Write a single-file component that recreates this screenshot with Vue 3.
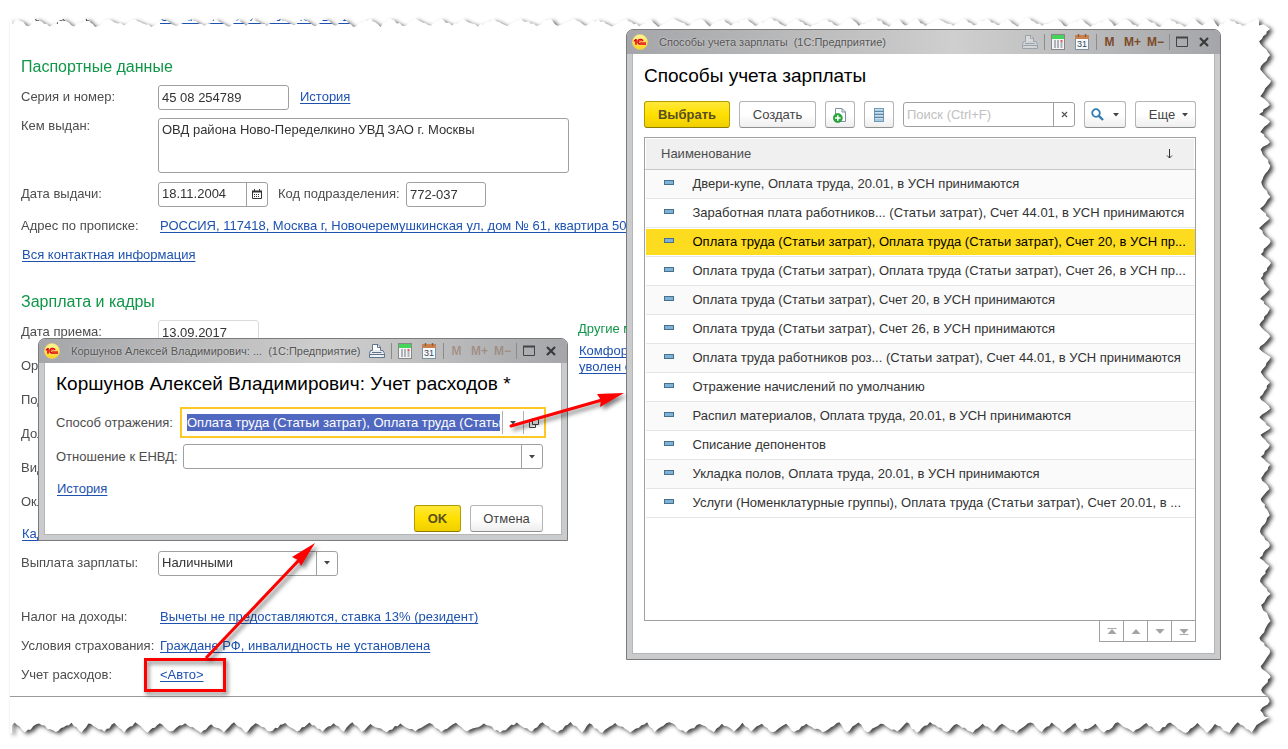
<script setup>
import { ref, onMounted } from 'vue'

const PAPER_W = 1261
const PAPER_H = 715

function random(seed) {
  let s = seed
  return () => {
    s = (s * 16807) % 2147483647
    return s / 2147483647
  }
}

// Walks along one side and returns [position, depth] pairs of a torn edge.
function tear(length, depth, seed) {
  const rnd = random(seed)
  const out = []
  let pos = 0
  let high = false
  let level = depth
  while (pos < length) {
    const step = 7 + rnd() * 10
    const target = high ? depth * (0.8 + rnd() * 0.2) : rnd() * depth * 0.15
    const parts = Math.ceil(step / 3)
    for (let i = 1; i <= parts; i++) {
      const jitter = i < parts ? (rnd() - 0.5) * 2.4 : 0
      const d = level + ((target - level) * i) / parts + jitter
      out.push([Math.min(length, pos + (step * i) / parts), Math.max(0, Math.min(depth, d))])
    }
    pos += step
    level = target
    high = !high
  }
  return out
}

function outline() {
  const top = tear(PAPER_W - 12, 9, 4241)
  const right = tear(PAPER_H - 20, 12, 977).map(([p, d]) => [PAPER_W - d, p + 4])
  const bottom = tear(PAPER_W - 14, 11, 3119).map(([p, d]) => [PAPER_W - 12 - p, PAPER_H - d])
  const pts = [[0, 0], ...top, ...right, ...bottom, [0, PAPER_H]]
  return pts
    .map(([x, y]) => `${((x / PAPER_W) * 100).toFixed(3)}% ${((y / PAPER_H) * 100).toFixed(3)}%`)
    .join(', ')
}
const paperClip = `polygon(${outline()})`

const series = ref('45 08 254789')
const issuer = ref('ОВД района Ново-Переделкино УВД ЗАО г. Москвы')
const issued = ref('18.11.2004')
const unit = ref('772-037')
const hired = ref('13.09.2017')
const method = ref('Оплата труда (Статьи затрат), Оплата труда (Статьи затрат), Счет 20, в УСН принимаются')
const envd = ref('')
const search = ref('')
const selected = ref(2)

const hidden = ['Организация:', 'Подразделение:', 'Должность:', 'Вид занятости:', 'Оклад:']

const rows = [
  'Двери-купе, Оплата труда, 20.01, в УСН принимаются',
  'Заработная плата работников... (Статьи затрат), Счет 44.01, в УСН принимаются',
  'Оплата труда (Статьи затрат), Оплата труда (Статьи затрат), Счет 20, в УСН пр...',
  'Оплата труда (Статьи затрат), Оплата труда (Статьи затрат), Счет 26, в УСН пр...',
  'Оплата труда (Статьи затрат), Счет 20, в УСН принимаются',
  'Оплата труда (Статьи затрат), Счет 26, в УСН принимаются',
  'Оплата труда работников роз... (Статьи затрат), Счет 44.01, в УСН принимаются',
  'Отражение начислений по умолчанию',
  'Распил материалов, Оплата труда, 20.01, в УСН принимаются',
  'Списание депонентов',
  'Укладка полов, Оплата труда, 20.01, в УСН принимаются',
  'Услуги (Номенклатурные группы), Оплата труда (Статьи затрат), Счет 20.01, в ...',
]

const methodInput = ref(null)
onMounted(() => {
  methodInput.value.focus({ preventScroll: true })
  methodInput.value.select()
})
</script>

<template>
  <div class="desk">
    <svg class="defs" width="0" height="0" aria-hidden="true">
      <defs>
        <linearGradient id="sun" x1="0" y1="0" x2="0" y2="1">
          <stop offset="0" stop-color="#fff8a0" />
          <stop offset="1" stop-color="#fcd21c" />
        </linearGradient>
        <symbol id="logo" viewBox="0 0 16 16">
          <circle cx="8" cy="8" r="7.6" fill="url(#sun)" stroke="#f0d060" stroke-width=".6" />
          <path d="M1.8 6.4 3.4 5H4.8V10.8H3.2V7.2L1.8 7.8Z" fill="#e2001a" />
          <path d="M11 7A2.6 2.3 0 1 0 8.6 10.1H14" fill="none" stroke="#e2001a" stroke-width="1.5" />
          <path d="M9.4 7.4A.9 .9 0 1 0 8.7 8.4H14" fill="none" stroke="#e2001a" stroke-width=".7" />
        </symbol>
        <symbol id="printer" viewBox="0 0 16 16">
          <path d="M3.5 7.5V1.5H9L11.5 4V7.5" fill="#fff" stroke="#5f7488" />
          <path d="M8.5 1.5V4.5H11.5" fill="none" stroke="#5f7488" />
          <path d="M3.5 7.5H1.5L.5 10.5V14.5H15.5V10.5L14 7.5H11.5" fill="#e6ecf0" stroke="#5f7488" />
          <path d="M3 9.5H12.5M.5 11.5H15.5" stroke="#5f7488" />
          <path d="M4 13H12" stroke="#fff" />
        </symbol>
        <symbol id="calc" viewBox="0 0 14 16">
          <rect x=".5" y=".5" width="13" height="15" fill="#f4f4f4" stroke="#878787" />
          <rect x="1" y="1" width="12" height="4" fill="#45d45a" />
          <path d="M3 7h2M6 7h2M3 9h2M6 9h2M3 11h2M6 11h2M3 13h2M6 13h2M9.5 9h2M9.5 11h2M9.5 13h2" stroke="#66727c" stroke-width="1.2" />
          <path d="M9.5 7h2" stroke="#e03030" stroke-width="1.6" />
        </symbol>
        <symbol id="cal" viewBox="0 0 14 16">
          <rect x=".5" y="2.5" width="13" height="13" fill="#f6f9fb" stroke="#8092a0" />
          <rect x="0" y="1" width="14" height="4" fill="#c9824f" />
          <path d="M3.5 0V3M10.5 0V3" stroke="#8a5a3a" stroke-width="1.4" />
          <text x="7" y="13" text-anchor="middle" font-size="9" fill="#34485c" font-family="Liberation Sans, Arial, sans-serif">31</text>
        </symbol>
        <symbol id="max" viewBox="0 0 12 12">
          <path d="M.5 2V10.5H11.5V2" fill="none" stroke="#444" />
          <path d="M0 1.5H12" stroke="#444" stroke-width="2" />
        </symbol>
        <symbol id="close" viewBox="0 0 10 10">
          <path d="M1 1 9 9M9 1 1 9" stroke="#3a3a3a" stroke-width="2.2" />
        </symbol>
        <symbol id="down" viewBox="0 0 6 4">
          <path d="M0 0H6L3 3.5Z" fill="#444" />
        </symbol>
      </defs>
    </svg>

    <div class="paper-shadow">
      <main class="paper" :style="{ clipPath: paperClip }">
        <div class="row cut">
          <span class="label">Гражданство:</span>
          <a class="ind" href="#">Страна: РОССИЯ, с 23.05.2012</a>
        </div>
        <h2 class="first">Паспортные данные</h2>
        <div class="row g5">
          <label class="label" for="series">Серия и номер:</label>
          <input id="series" v-model="series" class="field w131" />
          <a class="hist" href="#">История</a>
        </div>
        <div class="row area-row">
          <label class="label area-label" for="issuer">Кем выдан:</label>
          <textarea id="issuer" v-model="issuer" class="field area"></textarea>
        </div>
        <div class="row g8">
          <label class="label" for="issued">Дата выдачи:</label>
          <div class="combo w110">
            <input id="issued" v-model="issued" />
            <button type="button" aria-label="Календарь">
              <svg width="10" height="10" viewBox="0 0 10 10">
                <path d="M.5 2V9.5H9.5V2" fill="none" stroke="#333" />
                <path d="M0 2.5H10" stroke="#333" stroke-width="2" />
                <path d="M2.5 0V2M7.5 0V2" stroke="#333" />
                <path d="M2 5.5H8M2 7.5H8" stroke="#333" stroke-dasharray="1 1" />
              </svg>
            </button>
          </div>
          <label class="label unit-label" for="unit">Код подразделения:</label>
          <input id="unit" v-model="unit" class="field w80" />
        </div>
        <div class="row g6">
          <span class="label">Адрес по прописке:</span>
          <a class="ind" href="#">РОССИЯ, 117418, Москва г, Новочеремушкинская ул, дом № 61, квартира 50</a>
        </div>
        <div class="row g3"><a class="edge" href="#">Вся контактная информация</a></div>

        <div class="staff">
          <div>
            <h2>Зарплата и кадры</h2>
            <div class="row g5">
              <label class="label" for="hired">Дата приема:</label>
              <input id="hired" v-model="hired" class="field faint w101" readonly />
            </div>
            <div v-for="h in hidden" :key="h" class="row g8"><span class="label">{{ h }}</span></div>
            <div class="row g6"><a class="edge" href="#">Кадры</a></div>
          </div>
          <div class="other">
            <h3>Другие места</h3>
            <a href="#">Комфорт</a><br />
            <a href="#">уволен с</a>
          </div>
        </div>

        <div class="row g3">
          <label class="label" for="pay">Выплата зарплаты:</label>
          <div class="combo w180">
            <select id="pay"><option>Наличными</option></select>
            <span class="drop"><svg width="6" height="4"><use href="#down" /></svg></span>
          </div>
        </div>
        <div class="row tax">
          <span class="label">Налог на доходы:</span>
          <a class="ind" href="#">Вычеты не предоставляются, ставка 13% (резидент)</a>
        </div>
        <div class="row g3">
          <span class="label">Условия страхования:</span>
          <a class="ind" href="#">Граждане РФ, инвалидность не установлена</a>
        </div>
        <div class="row g3">
          <span class="label">Учет расходов:</span>
          <a class="ind" href="#">&lt;Авто&gt;</a>
        </div>
        <hr />
      </main>
    </div>

    <section class="window list-window">
      <header>
        <svg class="logo" width="16" height="16"><use href="#logo" /></svg>
        <span class="caption">Способы учета зарплаты &nbsp;(1С:Предприятие)</span>
        <button class="tool off" type="button" aria-label="Печать"><svg width="16" height="16"><use href="#printer" /></svg></button>
        <i></i>
        <button class="tool" type="button" aria-label="Калькулятор"><svg width="14" height="16"><use href="#calc" /></svg></button>
        <button class="tool" type="button" aria-label="Календарь"><svg width="14" height="16"><use href="#cal" /></svg></button>
        <i></i>
        <button class="mem" type="button">M</button>
        <button class="mem" type="button">M+</button>
        <button class="mem" type="button">M−</button>
        <i></i>
        <button class="sys" type="button" aria-label="Развернуть"><svg width="12" height="12"><use href="#max" /></svg></button>
        <button class="sys" type="button" aria-label="Закрыть"><svg width="10" height="10"><use href="#close" /></svg></button>
      </header>
      <div class="client list-client">
        <h1>Способы учета зарплаты</h1>
        <div class="toolbar">
          <button class="btn primary w86" type="button">Выбрать</button>
          <button class="btn w77" type="button">Создать</button>
          <button class="btn w30" type="button" aria-label="Создать группу">
            <svg width="14" height="16" viewBox="0 0 14 16">
              <path d="M2.5 7V1.5H9L12.5 5V14.5H8" fill="#fff" stroke="#7c93a6" />
              <path d="M9 1.5V5H12.5" fill="none" stroke="#7c93a6" />
              <circle cx="4.8" cy="11" r="4.5" fill="#27a83b" stroke="#178a2c" stroke-width=".6" />
              <path d="M2 11H7.6M4.8 8.2V13.8" stroke="#fff" stroke-width="1.6" />
            </svg>
          </button>
          <button class="btn w30" type="button" aria-label="Вид списка">
            <svg width="10" height="14" viewBox="0 0 10 14">
              <rect x=".5" y=".5" width="9" height="13" fill="#a9c8dc" stroke="#6f9ab8" />
              <path d="M0 3.5H10M0 6.5H10M0 9.5H10" stroke="#5c89aa" />
              <path d="M1 1.5H9M1 4.5H9M1 7.5H9M1 10.5H9" stroke="#cfe0ec" />
            </svg>
          </button>
          <div class="combo search">
            <input v-model="search" aria-label="Поиск" placeholder="Поиск (Ctrl+F)" />
            <button type="button" aria-label="Очистить"><svg width="7" height="7" viewBox="0 0 7 7"><path d="M1 1 6 6M6 1 1 6" stroke="#555" stroke-width="1.2" /></svg></button>
          </div>
          <button class="btn w42 find" type="button" aria-label="Найти">
            <svg width="13" height="13" viewBox="0 0 13 13">
              <circle cx="5" cy="5" r="3.8" fill="none" stroke="#2f7db3" stroke-width="1.8" />
              <path d="M7.8 7.8 12 12" stroke="#2f7db3" stroke-width="2.4" />
            </svg>
            <svg width="6" height="4"><use href="#down" /></svg>
          </button>
          <button class="btn w61 more" type="button">Еще <svg width="6" height="4"><use href="#down" /></svg></button>
        </div>
        <div class="grid">
          <table>
            <colgroup><col class="mark-col" /><col /></colgroup>
            <thead>
              <tr>
                <th colspan="2">
                  <div class="head">Наименование
                    <svg width="7" height="10" viewBox="0 0 7 10"><path d="M3.5 0V9M1 6.5 3.5 9 6 6.5" fill="none" stroke="#333" /></svg>
                  </div>
                </th>
              </tr>
            </thead>
            <tbody>
              <tr v-for="(r, i) in rows" :key="r" :class="{ picked: i === selected }" @click="selected = i">
                <td class="mark"><b></b></td>
                <td>{{ r }}</td>
              </tr>
            </tbody>
          </table>
        </div>
        <nav>
          <button type="button" aria-label="В начало"><svg width="10" height="7" viewBox="0 0 10 7"><path d="M.5 .5H9.5" stroke="#aaa" /><path d="M5 1 9.5 6H.5Z" fill="#a4a4a4" /></svg></button>
          <button type="button" aria-label="Вверх"><svg width="10" height="7" viewBox="0 0 10 7"><path d="M5 1 9.5 6H.5Z" fill="#a4a4a4" /></svg></button>
          <button type="button" aria-label="Вниз"><svg width="10" height="7" viewBox="0 0 10 7"><path d="M5 6 9.5 1H.5Z" fill="#a4a4a4" /></svg></button>
          <button type="button" aria-label="В конец"><svg width="10" height="7" viewBox="0 0 10 7"><path d="M.5 6.5H9.5" stroke="#aaa" /><path d="M5 6 9.5 1H.5Z" fill="#a4a4a4" /></svg></button>
        </nav>
      </div>
    </section>

    <section class="window cost-window">
      <header>
        <svg class="logo" width="16" height="16"><use href="#logo" /></svg>
        <span class="caption">Коршунов Алексей Владимирович: ... &nbsp;(1С:Предприятие)</span>
        <button class="tool" type="button" aria-label="Печать"><svg width="16" height="16"><use href="#printer" /></svg></button>
        <i></i>
        <button class="tool" type="button" aria-label="Калькулятор"><svg width="14" height="16"><use href="#calc" /></svg></button>
        <button class="tool" type="button" aria-label="Календарь"><svg width="14" height="16"><use href="#cal" /></svg></button>
        <i></i>
        <button class="mem off" type="button">M</button>
        <button class="mem off" type="button">M+</button>
        <button class="mem off" type="button">M−</button>
        <i></i>
        <button class="sys" type="button" aria-label="Развернуть"><svg width="12" height="12"><use href="#max" /></svg></button>
        <button class="sys" type="button" aria-label="Закрыть"><svg width="10" height="10"><use href="#close" /></svg></button>
      </header>
      <div class="client cost-client">
        <h1>Коршунов Алексей Владимирович: Учет расходов *</h1>
        <div class="line">
          <label class="label" for="method">Способ отражения:</label>
          <div class="focus">
            <input id="method" ref="methodInput" v-model="method" />
            <button type="button" aria-label="Выбрать"><svg width="6" height="4"><use href="#down" /></svg></button>
            <button type="button" aria-label="Открыть">
              <svg width="10" height="10" viewBox="0 0 10 10"><path d="M3.5 .5H9.5V6.5H3.5ZM3 3.5H.5V9.5H6.5V7" fill="none" stroke="#444" /></svg>
            </button>
          </div>
        </div>
        <div class="line second">
          <label class="label" for="envd">Отношение к ЕНВД:</label>
          <div class="combo envd">
            <input id="envd" v-model="envd" />
            <button type="button" aria-label="Выбрать"><svg width="6" height="4"><use href="#down" /></svg></button>
          </div>
        </div>
        <a class="history" href="#">История</a>
        <div class="actions">
          <button class="btn primary w47" type="button">OK</button>
          <button class="btn w73" type="button">Отмена</button>
        </div>
      </div>
    </section>

    <div class="frame-mark"></div>
    <svg class="arrows" width="640" height="700" viewBox="0 0 640 700" aria-hidden="true">
      <g fill="#fe0000" stroke="#fe0000">
        <path d="M206 658 300 559" stroke-width="3" fill="none" />
        <path d="M315 543 292 557 298 560 301 566Z" stroke="none" />
        <path d="M511 426 602 400" stroke-width="3" stroke-linecap="round" fill="none" />
        <path d="M624 393 597 394 601 400 600 407Z" stroke="none" />
      </g>
    </svg>
  </div>
</template>

<style>
body { background: #fff; }
</style>

<style scoped>
.desk {
  position: relative;
  padding: 18px 17px 16px 10px;
  overflow: hidden;
  font: 13px/16px "Liberation Sans", Arial, sans-serif;
  color: #4d4d4d;
}
* { box-sizing: border-box; }
.defs { position: absolute; }
svg { flex: none; display: block; }
input, textarea, select, button { font: inherit; color: inherit; margin: 0; }
button { padding: 0; background: none; border: 0; }
input, textarea, select { outline: 0; color: #333; }
a {
  color: #1d52b0;
  text-decoration: underline 1px;
  text-underline-offset: 2px;
  text-decoration-skip-ink: none;
  white-space: nowrap;
}

.paper-shadow { filter: drop-shadow(3px 2px 2px rgba(0, 0, 0, 0.75)); }
.paper { background: #fff; padding: 0 0 36px 11px; display: flow-root; }
.row { display: flex; align-items: center; height: 26px; }
.cut { height: 16px; margin-top: -9px; }
.g3 { margin-top: 3px; }
.g5 { margin-top: 5px; }
.g6 { margin-top: 6px; }
.g8 { margin-top: 8px; }
.tax { margin-top: 28px; }
.label { flex: none; width: 137px; white-space: nowrap; }
h2 { margin: 0; font: 16px/24px "Liberation Sans", Arial, sans-serif; color: #109648; }
h2.first { margin-top: 30px; }
.ind { margin-left: 2px; }
.edge { margin-left: 1px; }
.hist { margin-left: 11px; }
.field, .combo { height: 25px; border: 1px solid #a0a0a0; border-radius: 3px; background: #fff; }
.field { padding: 0 3px; }
.faint { border-color: #dadada; }
.area-row { height: 55px; margin-top: 8px; align-items: stretch; }
.area { width: 411px; height: 55px; padding: 3px; resize: none; overflow: hidden; }
.w131 { width: 131px; }
.w110 { width: 110px; }
.w80 { width: 80px; }
.w101 { width: 101px; }
.w180 { width: 180px; }
.unit-label { width: 128px; margin-left: 10px; }
.combo { display: flex; overflow: hidden; }
.combo input, .combo select { flex: 1; min-width: 0; border: 0; padding: 0 3px; background: none; appearance: none; }
.combo button, .drop { flex: none; width: 21px; border-left: 1px solid #a0a0a0; display: flex; align-items: center; justify-content: center; }

.staff { display: grid; grid-template-columns: 557px 1fr; margin-top: 22px; }
.other { padding-top: 31px; line-height: 16px; overflow: hidden; }
.other h3 { margin: 0 0 6px; font: inherit; color: #109648; white-space: nowrap; }
.other a { margin-left: 1px; }
hr { border: 0; height: 1px; background: #9a9a9a; margin: 8px 0 0 -11px; }

.window {
  position: absolute;
  border: 1px solid #7b7b7b;
  border-radius: 7px 7px 0 0;
  background: #c9cbcc;
  padding: 0 5px 5px;
}
.list-window { left: 626px; top: 29px; width: 595px; }
.cost-window { left: 38px; top: 338px; width: 530px; }
.window header {
  display: flex;
  align-items: center;
  height: 24px;
  margin: 0 -5px;
  padding: 0 5px;
  border-radius: 6px 6px 0 0;
  background: linear-gradient(90deg, #a5a6a9, #c6c6c6 45%, #cfcfcf 55%, #a5a6a9);
  font-size: 11px;
}
.caption { flex: 1; padding-left: 11px; white-space: nowrap; color: #555; }
header .caption { text-shadow: 0 0 2px #ddd; }
header i { width: 1px; height: 16px; background: #8b8b8b; margin: 0 1px 0 2px; }
.tool { width: 24px; display: flex; justify-content: center; }
.off { opacity: 0.4; }
.mem { width: 23px; font-weight: 700; font-size: 12px; color: #7d4a28; }
.mem.off { opacity: 0.35; }
.sys { width: 22px; display: flex; justify-content: center; }
.client { background: #fff; border: 1px solid #b4b6b7; border-top: 0; }
h1 { margin: 0; font: 19px/22px "Liberation Sans", Arial, sans-serif; color: #000; white-space: nowrap; }

.list-client { padding: 11px 18px 11px 11px; }
.toolbar { display: flex; align-items: center; gap: 9px; margin: 14px 0 9px; }
.btn {
  flex: none;
  height: 27px;
  border: 1px solid #b5b5b5;
  border-bottom-color: #8f8f8f;
  border-radius: 3px;
  background: linear-gradient(#fff 50%, #eee);
  color: #444;
  display: flex;
  align-items: center;
  justify-content: center;
}
.primary { background: linear-gradient(#ffe83a, #ffe000 50%, #f0cf00); border-color: #b49b00; border-bottom-color: #8f7b00; color: #594f20; font-weight: 700; }
.w86 { width: 86px; }
.w77 { width: 77px; }
.w30 { width: 30px; }
.w42 { width: 42px; }
.w61 { width: 61px; }
.w47 { width: 47px; }
.w73 { width: 73px; }
.search { flex: 1; min-width: 0; }
.search input::placeholder { color: #c0c0c0; opacity: 1; }
.find { gap: 9px; }
.more { gap: 7px; padding-left: 6px; }
.grid { border: 1px solid #a0a0a0; height: 484px; overflow: hidden; }
table { width: 100%; border-collapse: collapse; table-layout: fixed; }
.mark-col { width: 47px; }
th { font-weight: 400; text-align: left; padding: 0; height: 31px; background: #f0f0f0; border: 1px solid #fff; border-bottom: 1px solid #c8c8c8; }
.head { display: flex; justify-content: space-between; align-items: center; padding: 0 21px 0 15px; }
td { height: 29px; padding: 0; border-bottom: 1px solid #e6e6e6; color: #333; white-space: nowrap; }
tbody tr:nth-child(odd) td { background: #fafafa; }
tbody tr.picked td { background: #fddb1f; color: #000; box-shadow: inset 0 1px #fff, inset 0 -1px #fff; }
td.mark { padding-left: 18px; }
.mark b { display: block; width: 10px; height: 5px; margin-top: -3px; background: #7fb2d6; border: 1px solid #45718f; }
nav { display: flex; justify-content: flex-end; }
nav button { width: 25px; height: 22px; margin: -1px 0 0 -1px; border: 1px solid #a0a0a0; background: #fff; display: flex; align-items: center; justify-content: center; }

.cost-client { padding: 10px 18px 2px 11px; }
.line { display: flex; align-items: center; height: 31px; margin-top: 12px; }
.line .label { width: 124px; }
.focus { flex: 1; min-width: 0; display: flex; align-items: center; height: 31px; margin-right: -3px; border: 2px solid #fdc823; padding-left: 5px; }
.focus input { flex: 1; min-width: 0; border: 0; padding: 0; height: 17px; line-height: 17px; margin-right: 2px; }
.focus input::selection { background: #5068c0; color: #fff; }
.focus button { width: 21px; height: 23px; border-left: 1px solid #b0b0b0; display: flex; align-items: center; justify-content: center; }
.second { margin-top: 3px; }
.envd { flex: 1; margin-left: 3px; }
.history { display: inline-block; margin: 9px 0 0 1px; }
.actions { display: flex; justify-content: flex-end; gap: 9px; margin-top: 8px; }

.frame-mark {
  position: absolute;
  left: 144px;
  top: 658px;
  width: 82px;
  height: 34px;
  border: 3px solid #fe0000;
  filter: drop-shadow(2px 3px 2px rgba(0, 0, 0, 0.5));
}
.arrows { position: absolute; left: 0; top: 0; pointer-events: none; filter: drop-shadow(3px 3px 2px rgba(0, 0, 0, 0.5)); }
</style>
